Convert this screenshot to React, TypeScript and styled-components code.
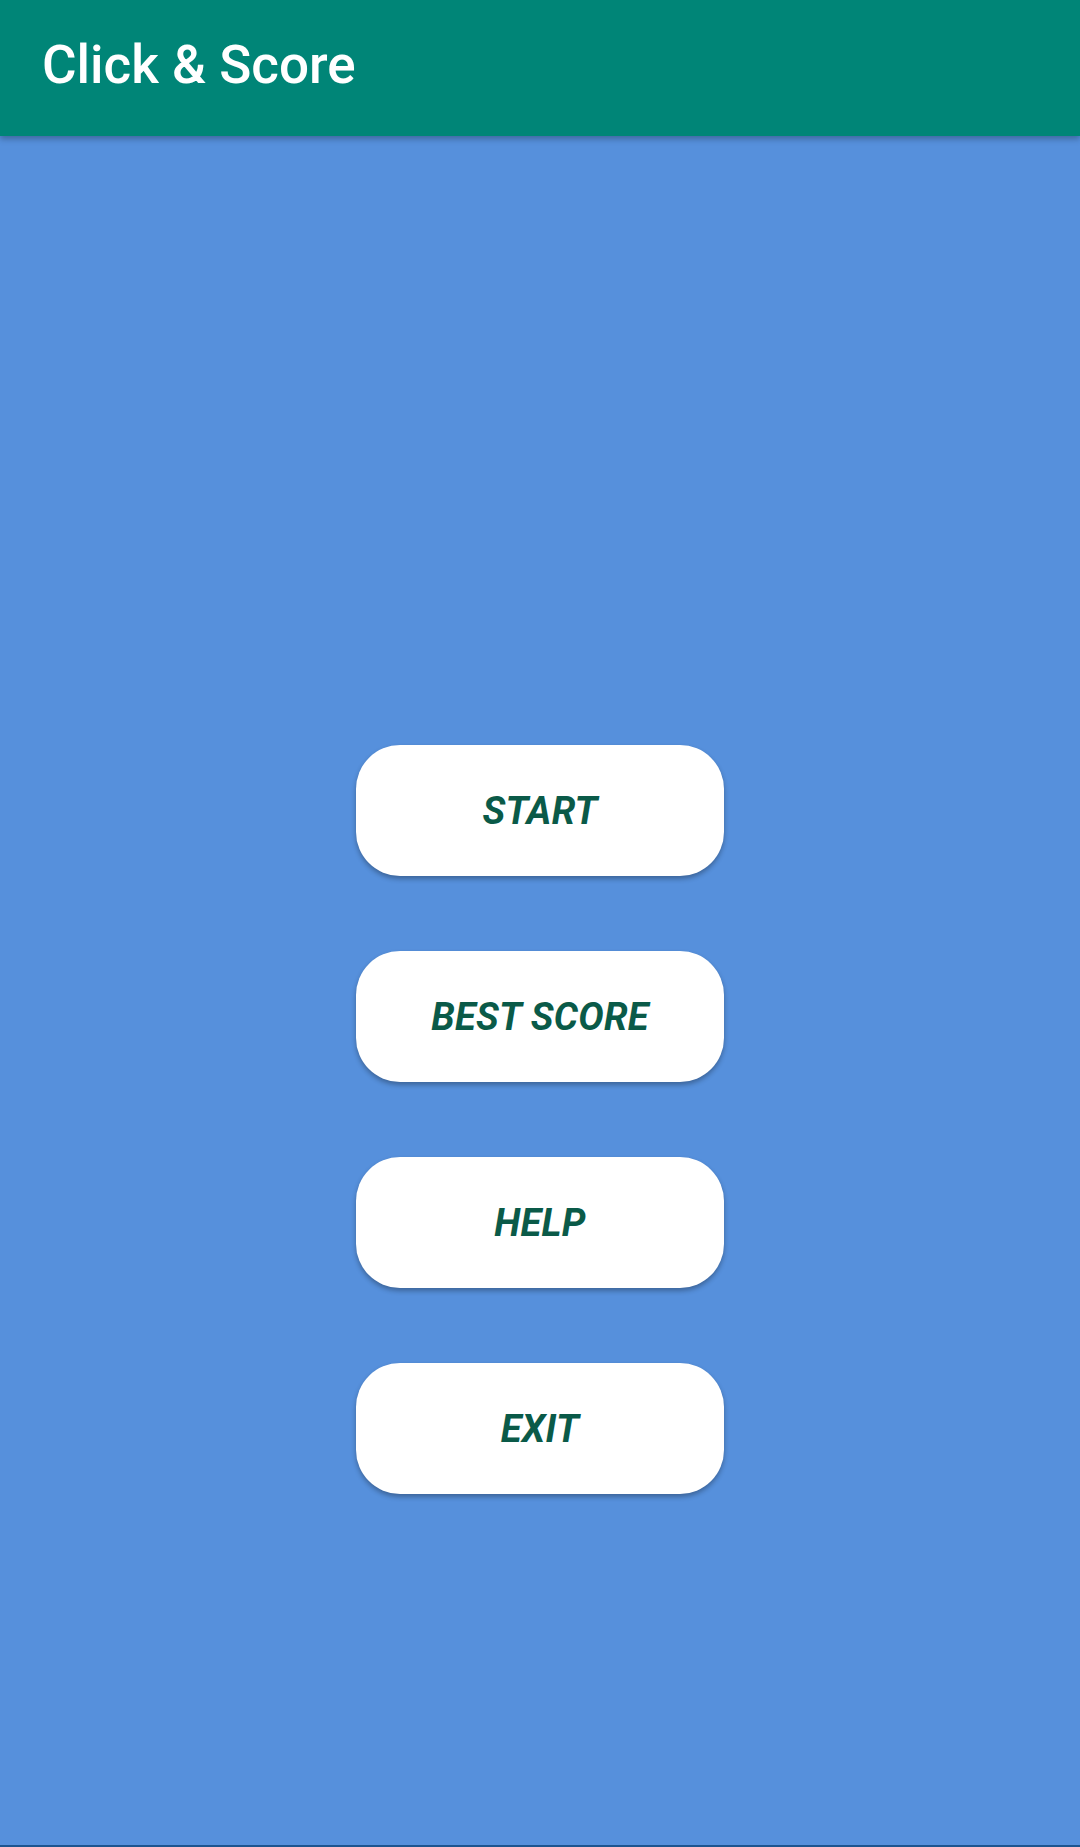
import React from "react";
import styled, { createGlobalStyle } from "styled-components";

const Global = createGlobalStyle`
  html, body { margin: 0; padding: 0; }
  body { background: #5690dc; font-family: Roboto, "Noto Sans", sans-serif; }
`;

const Screen = styled.div`
  width: 1080px;
  height: 1847px;
  display: flex;
  flex-direction: column;
  background: #5690dc;
  overflow: hidden;
`;

const AppBar = styled.header`
  height: 136px;
  flex: 0 0 136px;
  background: #008577;
  display: flex;
  align-items: center;
  padding-left: 42px;
  box-shadow: 0 3px 6px rgba(0, 0, 0, 0.28);
  position: relative;
  z-index: 1;
`;

const Title = styled.h1`
  margin: 0;
  margin-top: -6px;
  color: #ffffff;
  font-family: Roboto, sans-serif;
  font-weight: 500;
  font-size: 53px;
  letter-spacing: 0;
`;

const Main = styled.main`
  flex: 1;
  display: flex;
  flex-direction: column;
  align-items: center;
  gap: 75px;
  padding-top: 609px;
  border-bottom: 2px solid #1d548f;
`;

const MenuButton = styled.button`
  width: 368px;
  height: 131px;
  border: none;
  border-radius: 44px;
  background: #ffffff;
  box-shadow: 0 3px 5px rgba(0, 0, 0, 0.3);
  color: #0a5a48;
  font-family: Roboto, sans-serif;
  font-weight: 700;
  font-style: italic;
  font-size: 38px;
  letter-spacing: 0.3px;
  display: flex;
  align-items: center;
  justify-content: center;
  padding: 0;
  cursor: pointer;
`;

export default function App() {
  const items = ["START", "BEST SCORE", "HELP", "EXIT"];
  return (
    <>
      <Global />
      <Screen>
        <AppBar>
          <Title>Click &amp; Score</Title>
        </AppBar>
        <Main>
          {items.map((t) => (
            <MenuButton key={t}>{t}</MenuButton>
          ))}
        </Main>
      </Screen>
    </>
  );
}
